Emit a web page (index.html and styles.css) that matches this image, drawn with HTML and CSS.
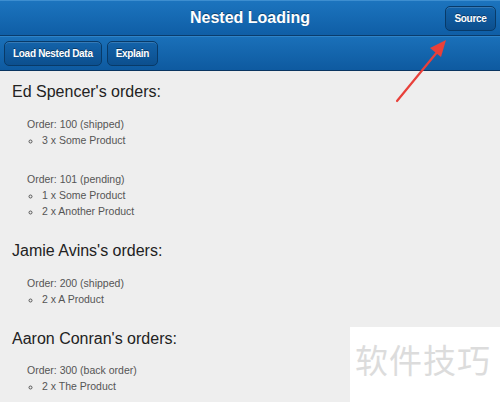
FILE: index.html
```html
<!DOCTYPE html>
<html lang="en">
<head>
    <meta charset="UTF-8">
    <title>Nested Loading</title>
    <link rel="stylesheet" href="styles.css">
</head>
<body>
    <div class="titlebar">
        <span class="title">Nested Loading</span>
        <button class="btn source">Source</button>
    </div>
    <div class="toolbar">
        <button class="btn">Load Nested Data</button>
        <button class="btn">Explain</button>
    </div>
    <div class="content">
        <div class="user">
            <h2>Ed Spencer's orders:</h2>
            <div class="order">
                <p>Order: 100 (shipped)</p>
                <ul>
                    <li>3 x Some Product</li>
                </ul>
            </div>
            <div class="order">
                <p>Order: 101 (pending)</p>
                <ul>
                    <li>1 x Some Product</li>
                    <li>2 x Another Product</li>
                </ul>
            </div>
        </div>
        <div class="user">
            <h2>Jamie Avins's orders:</h2>
            <div class="order">
                <p>Order: 200 (shipped)</p>
                <ul>
                    <li>2 x A Product</li>
                </ul>
            </div>
        </div>
        <div class="user">
            <h2>Aaron Conran's orders:</h2>
            <div class="order">
                <p>Order: 300 (back order)</p>
                <ul>
                    <li>2 x The Product</li>
                </ul>
            </div>
        </div>
    </div>

    <svg class="arrow" width="60" height="70" viewBox="0 0 60 70">
        <line x1="3" y1="65" x2="44" y2="15" stroke="#e8403a" stroke-width="2.2" stroke-linecap="round"/>
        <polygon points="52,4 36,12 47,21" fill="#e8403a"/>
    </svg>
    <div class="watermark">软件技巧</div>
</body>
</html>
```

FILE: styles.css
```css
* {
    box-sizing: border-box;
}
body {
    margin: 0;
    width: 500px;
    height: 402px;
    overflow: hidden;
    background: #eeeeee;
    font-family: 'Liberation Sans', Arial, sans-serif;
    position: relative;
}
.titlebar {
    height: 36px;
    background: linear-gradient(#1c74be, #0f5ea6);
    border-bottom: 1px solid #0a3c6c;
    border-top: 1px solid #3d8ed0;
    display: flex;
    align-items: center;
    justify-content: center;
    position: relative;
}
.title {
    color: #fff;
    font-weight: bold;
    font-size: 16px;
    text-shadow: 0 -1px 0 rgba(0, 0, 0, 0.4);
}
.toolbar {
    height: 35px;
    background: linear-gradient(#1a70b9, #0e5aa0);
    border-top: 1px solid #2f83c8;
    border-bottom: 1px solid #0a3560;
    display: flex;
    align-items: center;
    gap: 5px;
    padding: 0 4px;
}
.btn {
    font-family: 'Liberation Sans', Arial, sans-serif;
    font-size: 10px;
    font-weight: bold;
    letter-spacing: -0.3px;
    color: #fff;
    height: 25px;
    padding: 0 8px;
    background: linear-gradient(#1363aa, #0c4f8e);
    border: 1px solid #083a68;
    border-radius: 5px;
    box-shadow: inset 0 1px 0 rgba(255, 255, 255, 0.15);
    text-shadow: 0 -1px 0 rgba(0, 0, 0, 0.4);
}
.source {
    position: absolute;
    right: 4px;
    top: 5px;
    width: 51px;
    padding: 0;
}
.content {
    padding: 11px 0 0 12px;
    color: #333;
}
.user h2 {
    margin: 0 0 14px 0;
    font-size: 16px;
    font-weight: normal;
    color: #222;
    line-height: 20px;
}
.order {
    padding-left: 15px;
    font-size: 10.5px;
    line-height: 16px;
    color: #555;
    margin-bottom: 23px;
}
.order p {
    margin: 0;
}
.order ul {
    margin: 0;
    padding-left: 15px;
    list-style: circle;
}
.user:last-child h2 {
    margin-bottom: 13px;
}
.user + .user {
    margin-top: -1px;
}
.arrow {
    position: absolute;
    left: 394px;
    top: 36px;
}
.watermark {
    position: absolute;
    left: 350px;
    top: 327px;
    width: 150px;
    height: 75px;
    background: #fff;
    color: #dcdcdc;
    font-family: 'Noto Sans CJK SC', sans-serif;
    font-size: 33px;
    line-height: 40px;
    padding: 12px 0 0 5px;
    letter-spacing: 1px;
}
```
